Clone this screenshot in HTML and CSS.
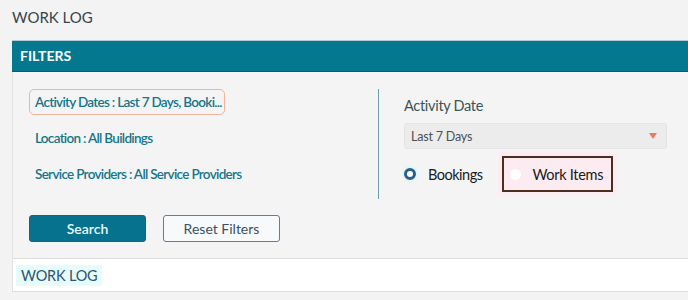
FILE: index.html
```html
<!DOCTYPE html>
<html lang="en">
<head>
    <meta charset="UTF-8">
    <title>Work Log</title>
    <link rel="stylesheet" href="styles.css">
</head>
<body>
    <!-- Page title -->
    <h1 class="page-title">WORK LOG</h1>

    <!-- Filters panel -->
    <div class="panel">
        <div class="panel-header">FILTERS</div>
        <div class="panel-body">
            <div class="filter-row">
                <div class="filter-list">
                    <a class="filter-link active">Activity Dates : Last 7 Days, Booki...</a>
                    <a class="filter-link">Location : All Buildings</a>
                    <a class="filter-link">Service Providers : All Service Providers</a>
                </div>
                <div class="filter-detail">
                    <label class="field-label">Activity Date</label>
                    <div class="select">
                        <span>Last 7 Days</span>
                        <span class="caret"></span>
                    </div>
                    <div class="radio-row">
                        <label class="radio checked"><span class="dot"></span>Bookings</label>
                        <label class="radio focused"><span class="dot"></span>Work Items</label>
                    </div>
                </div>
            </div>
            <div class="actions">
                <button class="btn btn-primary">Search</button>
                <button class="btn btn-outline">Reset Filters</button>
            </div>
        </div>
    </div>

    <!-- Results panel -->
    <div class="results">
        <span class="results-title">WORK LOG</span>
    </div>
</body>
</html>
```
FILE: styles.css
```css
body {
    margin: 0;
    padding: 0 0 0 12px;
    background-color: #f3f3f3;
    font-family: Lato, "Open Sans", sans-serif;
    height: 300px;
    overflow: hidden;
}

.page-title {
    margin: 0;
    padding-top: 7px;
    height: 33px;
    font-size: 15px;
    font-weight: normal;
    color: #36454a;
    line-height: 20px;
}

.panel-header {
    background-color: #03788f;
    border-top: 1px solid #b3cbd8;
    border-bottom: 1px solid #0b5b6b;
    color: #fff;
    font-size: 14px;
    font-weight: bold;
    height: 30px;
    line-height: 30px;
    padding-left: 8px;
}

.panel-body {
    background-color: #f4f4f4;
    border-left: 1px solid #e2e2e2;
    border-bottom: 1px solid #dedede;
    padding: 17px 0 16px 16px;
}

.filter-row {
    display: flex;
}

.filter-list {
    width: 349px;
    display: flex;
    flex-direction: column;
}

.filter-link {
    display: inline-block;
    align-self: flex-start;
    white-space: nowrap;
    color: #16768a;
    font-size: 13.5px;
    font-weight: 600;
    letter-spacing: -0.7px;
    line-height: 24px;
    padding: 0 5px;
    border: 1px solid transparent;
    border-radius: 5px;
    margin-bottom: 10px;
}

.filter-link.active {
    width: 184px;
    border-color: #f0b39c;
}

.filter-detail {
    border-left: 1px solid #6f9db0;
    padding-left: 25px;
    width: 263px;
    height: 110px;
}

.field-label {
    display: block;
    font-size: 14.5px;
    letter-spacing: -0.3px;
    color: #3a5558;
    margin-top: 8px;
    line-height: 18px;
}

.select {
    display: flex;
    justify-content: space-between;
    align-items: center;
    margin-top: 8px;
    height: 24px;
    background-color: #ececec;
    border: 1px solid #e4e4e4;
    border-radius: 3px;
    padding: 0 9px 0 6px;
    font-size: 12.5px;
    letter-spacing: -0.2px;
    color: #4a5055;
}

.caret {
    width: 0;
    height: 0;
    border-left: 4px solid transparent;
    border-right: 4px solid transparent;
    border-top: 6px solid #ee7a5a;
}

.radio-row {
    display: flex;
    align-items: center;
    margin-top: 7px;
}

.radio {
    display: flex;
    align-items: center;
    font-size: 14.5px;
    color: #1a1a1a;
}

.radio.checked {
    letter-spacing: -0.5px;
}

.radio .dot {
    width: 12px;
    height: 12px;
    border-radius: 50%;
    box-sizing: border-box;
    margin-right: 12px;
}

.radio.checked .dot {
    border: 3px solid #2c5d8e;
    background-color: #fff;
    box-shadow: 0 0 0 2px #dff6f6;
}

.radio.focused {
    margin-left: 20px;
    width: 111px;
    height: 36px;
    box-sizing: border-box;
    padding: 0 0 0 6px;
    letter-spacing: -0.3px;
    border: 2px solid #4b2e1e;
    background-color: #fcecf1;
    box-shadow: 0 0 0 4px #fdedf2;
}

.radio.focused .dot {
    width: 11px;
    height: 11px;
    background-color: #fff;
    margin-right: 11px;
}

.actions {
    display: flex;
    margin-top: 16px;
}

.btn {
    width: 117px;
    height: 27px;
    font-family: Lato, "Open Sans", sans-serif;
    font-size: 14px;
    border-radius: 3px;
    margin-right: 17px;
    cursor: pointer;
}

.btn-primary {
    background-color: #07728d;
    border: 1px solid #3d4f7c;
    color: #e6fbff;
    font-weight: 600;
}

.btn-outline {
    background-color: #f8f9fb;
    border: 1px solid #6c76a2;
    color: #3a5263;
}

.results {
    background-color: #fff;
    border-left: 1px solid #e2e2e2;
    border-bottom: 1px solid #dedede;
    height: 32px;
    display: flex;
    align-items: center;
    padding-left: 3px;
}

.results-title {
    background-color: #e6fbfb;
    color: #2e5470;
    font-size: 14.5px;
    letter-spacing: -0.2px;
    padding: 2px 5px;
}
```
